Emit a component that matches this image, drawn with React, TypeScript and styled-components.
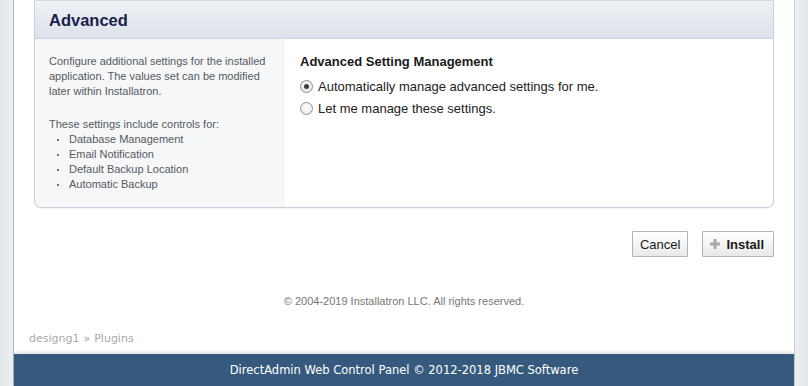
import React from "react"
import styled, { createGlobalStyle } from "styled-components"

const Global = createGlobalStyle`
    html, body {
        margin: 0;
        padding: 0;
        height: 100%;
    }

    body {
        background: #eef0f3;
        font-family: "Liberation Sans", Arial, sans-serif;
        overflow: hidden;
    }
`

const Shell = styled.div`
    display: flex;
    justify-content: center;
    height: 386px;
    padding: 0 13px;
    background: linear-gradient(90deg, #e3e6ea 0, #eef0f3 13px, #eef0f3 calc(100% - 13px), #e1e4e9 100%);
`

const Page = styled.div`
    flex: 1;
    display: flex;
    flex-direction: column;
    background: #fff;
    border-left: 1px solid #aab6c4;
    border-right: 1px solid #c6ced8;
`

const Content = styled.div`
    padding: 0 20px;
`

const Panel = styled.section`
    border: 1px solid #c9cfd7;
    border-top-color: #d6dbe2;
    border-radius: 0 0 7px 7px;
    overflow: hidden;
    box-shadow: 0 1px 1px rgba(0, 0, 0, 0.04);
`

const PanelHeader = styled.header`
    height: 37px;
    display: flex;
    align-items: center;
    padding: 0 14px;
    background: linear-gradient(180deg, #eef1f5 0%, #e6eaf0 50%, #dde2ea 100%);
    border-bottom: 1px solid #ccd3dc;

    h2 {
        margin: 0;
        font-size: 16.5px;
        font-weight: bold;
        color: #1b1f4d;
        padding-top: 1px;
    }
`

const PanelBody = styled.div`
    display: grid;
    grid-template-columns: 250px 1fr;
`

const Aside = styled.div`
    background: #f6f7f9;
    padding: 15px 14px 15px 14px;
    font-size: 11px;
    line-height: 15px;
    color: #555a60;

    p {
        margin: 0 0 18px 0;
    }
`

const Bullets = styled.ul`
    margin: 0;
    padding: 0 0 0 20px;
    list-style: none;

    li {
        position: relative;
    }

    li::before {
        content: "";
        position: absolute;
        left: -12px;
        top: 7px;
        width: 2px;
        height: 2px;
        background: #6b6f75;
    }
`

const Main = styled.div`
    padding: 14px 15px;
    color: #222;
`

const Heading = styled.h3`
    margin: 0 0 5px 0;
    font-size: 13px;
    line-height: 17px;
    font-weight: bold;
    color: #1a1a1a;
`

const Option = styled.label`
    display: flex;
    align-items: center;
    gap: 5px;
    height: 22px;
    font-size: 13px;
    color: #222;
`

const Radio = styled.span<{ $checked?: boolean }>`
    width: 11px;
    height: 11px;
    border-radius: 50%;
    border: 1px solid #8e8e8e;
    background: radial-gradient(circle at 50% 40%, #fdfdfd 0%, #e4e4e4 100%);
    display: flex;
    align-items: center;
    justify-content: center;

    &::after {
        content: "";
        width: 5px;
        height: 5px;
        border-radius: 50%;
        background: #3d3d3d;
        display: ${p => (p.$checked ? "block" : "none")};
    }
`

const Actions = styled.div`
    display: flex;
    justify-content: flex-end;
    gap: 14px;
    margin-top: 23px;
`

const Button = styled.button<{ $primary?: boolean }>`
    height: 26px;
    display: flex;
    align-items: center;
    gap: 5px;
    padding: ${p => (p.$primary ? "0 9px 0 6px" : "0 7px")};
    font-family: "Liberation Sans", Arial, sans-serif;
    font-size: 13px;
    font-weight: ${p => (p.$primary ? "bold" : "normal")};
    color: #1a1a1a;
    background: linear-gradient(180deg, #ffffff 0%, #f3f3f3 60%, #e8e8e8 100%);
    border: 1px solid #b4b4b4;
    border-radius: 1px;
`

const Plus = () => (
    <svg width="12" height="12" viewBox="0 0 12 12">
        <path d="M6 1v10M1 6h10" stroke="#a8a8a8" strokeWidth="3" />
    </svg>
)

const Copyright = styled.p`
    margin: 38px 0 0 0;
    text-align: center;
    font-size: 11px;
    line-height: 13px;
    color: #777;
`

const Crumbs = styled.div`
    margin-top: 24px;
    padding-left: 15px;
    font-family: "DejaVu Sans", Verdana, sans-serif;
    font-size: 11px;
    line-height: 14px;
    color: #a8a8a8;

    span {
        margin: 0 4px;
        color: #9a9a9a;
    }
`

const Footer = styled.footer`
    margin-top: auto;
    height: 32px;
    display: flex;
    align-items: center;
    justify-content: center;
    background: #365a7e;
    box-shadow: 0 -2px 3px rgba(0, 0, 0, 0.12);
    font-family: "DejaVu Sans", Verdana, sans-serif;
    font-size: 11.5px;
    color: #fff;
`

const App = () => (
    <>
        <Global />
        <Shell>
            <Page>
                <Content>
                    <Panel>
                        <PanelHeader>
                            <h2>Advanced</h2>
                        </PanelHeader>
                        <PanelBody>
                            <Aside>
                                <p>Configure additional settings for the installed application. The values set can be modified later within Installatron.</p>
                                <div>These settings include controls for:</div>
                                <Bullets>
                                    <li>Database Management</li>
                                    <li>Email Notification</li>
                                    <li>Default Backup Location</li>
                                    <li>Automatic Backup</li>
                                </Bullets>
                            </Aside>
                            <Main>
                                <Heading>Advanced Setting Management</Heading>
                                <Option>
                                    <Radio $checked />
                                    Automatically manage advanced settings for me.
                                </Option>
                                <Option>
                                    <Radio />
                                    Let me manage these settings.
                                </Option>
                            </Main>
                        </PanelBody>
                    </Panel>

                    <Actions>
                        <Button>Cancel</Button>
                        <Button $primary><Plus />Install</Button>
                    </Actions>

                    <Copyright>© 2004-2019 Installatron LLC. All rights reserved.</Copyright>
                </Content>

                <Crumbs>designg1<span>»</span>Plugins</Crumbs>

                <Footer>DirectAdmin Web Control Panel © 2012-2018 JBMC Software</Footer>
            </Page>
        </Shell>
    </>
)

export default App
